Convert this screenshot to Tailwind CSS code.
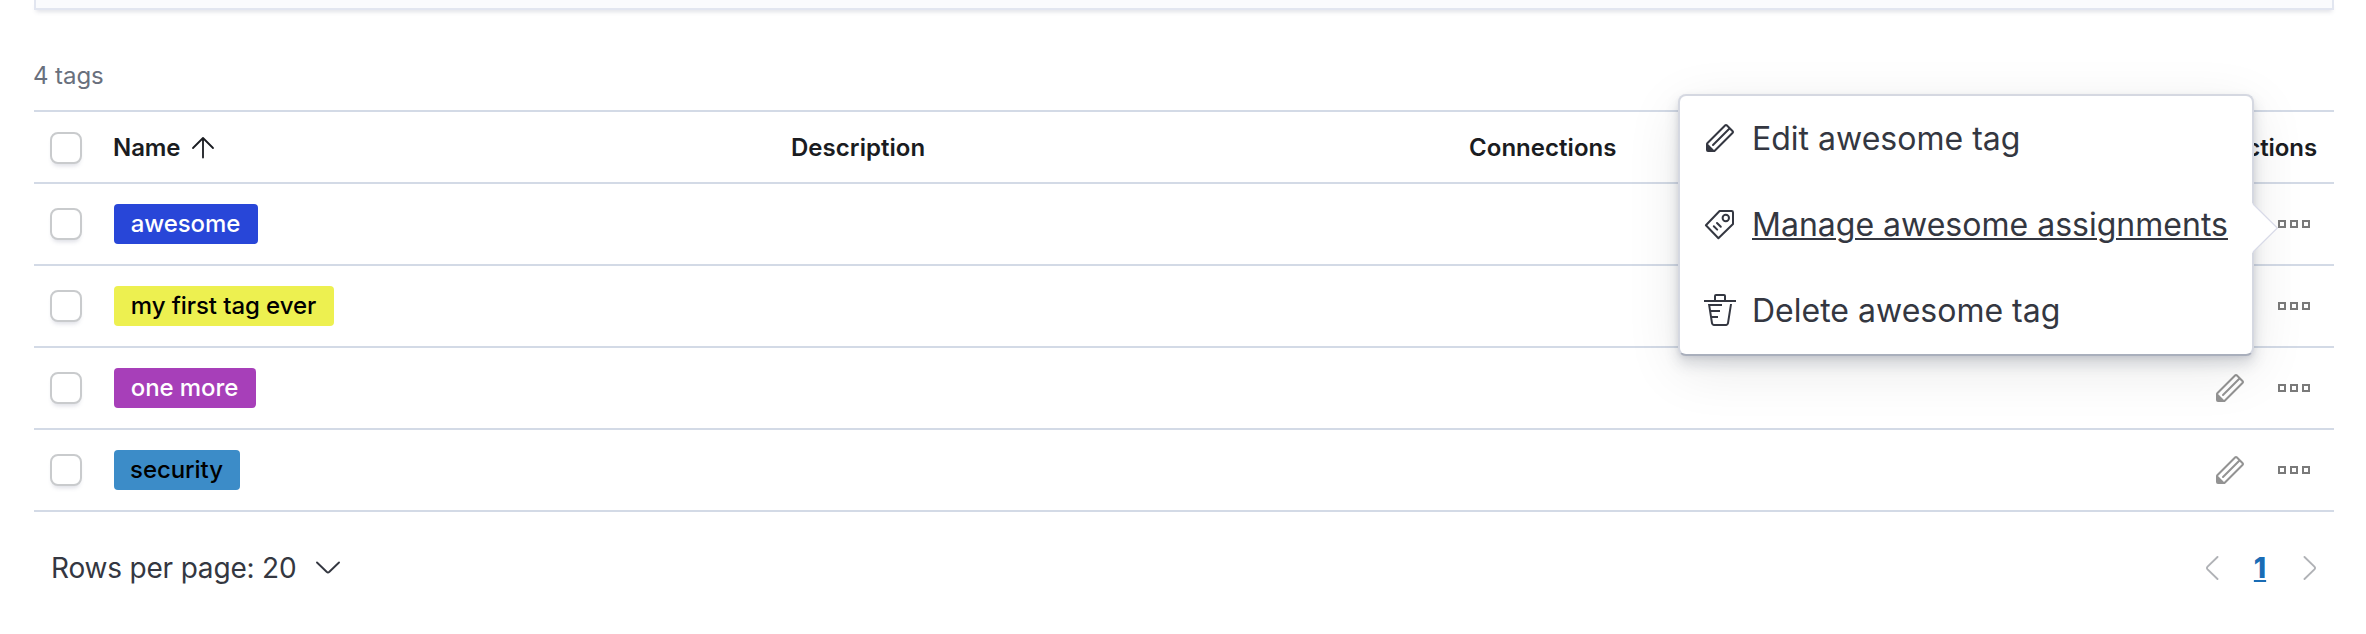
<!DOCTYPE html>
<html lang="en">
<head>
<meta charset="utf-8">
<title>Tags</title>
<script src="https://cdn.jsdelivr.net/npm/@tailwindcss/browser@4"></script>
</head>
<body class="relative h-[634px] overflow-hidden bg-white px-8.5 pr-8 font-['Inter','Liberation_Sans',sans-serif] tracking-[-0.005em] text-[#343741]">
<svg class="hidden">
  <symbol id="pencil" viewBox="0 0 16 16"><path d="M12.148 3.148L11 2l-9 9v3h3l9-9-1.144-1.144-8.002 7.998a.502.502 0 01-.708 0 .502.502 0 010-.708l8.002-7.998zM11 1c.256 0 .512.098.707.293l3 3a.999.999 0 010 1.414l-9 9A.997.997 0 015 15H2a1 1 0 01-1-1v-3c0-.265.105-.52.293-.707l9-9A.997.997 0 0111 1zM5 14H2v-3l3 3z"/></symbol>
  <symbol id="boxes" viewBox="0 0 16 16"><path d="M0 6h4v4H0V6zm1 1v2h2V7H1zm5-1h4v4H6V6zm1 1v2h2V7H7zm5-1h4v4h-4V6zm1 3h2V7h-2v2z"/></symbol>
  <symbol id="tag" viewBox="0 0 16 16"><path fill="none" stroke="currentColor" stroke-linejoin="round" d="M7.800 1.500h6q.7 0 .7.700v5.800L7.200 15.100.95 8.600z"/><circle cx="10.900" cy="5" r="1.600" fill="none" stroke="currentColor"/><path fill="none" stroke="currentColor" stroke-linecap="round" d="M4.900 9.100l1.700 1.700M6.500 7.500l1.900 1.900"/></symbol>
  <symbol id="trash" viewBox="0 0 16 16"><path d="M11 3h5v1H0V3h5V1a1 1 0 011-1h4a1 1 0 011 1v2zm-7.056 8H7v1H4.1l.392 2.519c.042.269.254.458.493.458h6.03c.239 0 .451-.189.493-.458l1.498-9.576H14l-1.504 9.73c-.116.747-.74 1.304-1.481 1.304h-6.03c-.741 0-1.365-.557-1.481-1.304l-1.511-9.73H9V5.95H3.157L3.476 8H8v1H3.632l.312 2zM6 3h4V1H6v2z"/></symbol>
</svg>

<div class="h-2.5 border-2 border-t-0 border-[#e2e6f0] bg-[#fafbfd] shadow-[0_4px_4px_-2px_rgba(90,95,130,0.18)]"></div>

<div class="flex h-25 items-center pt-[31px] text-2xl leading-9 text-[#69707d]"><span class="mt-px -ml-px">4 tags</span></div>

<div class="border-t-2 border-[#d3dae6]">
  <div class="grid h-18 grid-cols-[64px_678px_678px_678px_1fr] items-center border-b-2 border-[#d3dae6] text-2xl font-semibold text-[#1a1c21]">
    <div class="pt-0.5 pl-4"><div class="size-8 rounded-lg border-2 border-[#c9cbcd] bg-white shadow-[0_4px_4px_-2px_rgba(90,95,130,0.2)]"></div></div>
    <div class="flex items-center gap-2.5 pt-px pl-[15px]"><span>Name</span><svg class="h-6 w-6" viewBox="0 0 24 24" fill="none" stroke="currentColor" stroke-width="1.8" stroke-linecap="round" stroke-linejoin="round"><path d="M12 21.500V2M2 12L12 2l10 10"/></svg></div>
    <div class="pt-px pl-[15px] tracking-[0.04px]">Description</div>
    <div class="pt-px pl-[15px] tracking-[0.04px]">Connections</div>
    <div class="pt-px pr-[17px] text-right">Actions</div>
  </div>

  <div class="grid h-20.5 grid-cols-[64px_1fr_auto] items-center border-b-2 border-[#d3dae6]">
    <div class="pl-4"><div class="size-8 rounded-lg border-2 border-[#c9cbcd] bg-white shadow-[0_4px_4px_-2px_rgba(90,95,130,0.2)]"></div></div>
    <div class="pl-4"><div class="flex h-10 w-36 items-center justify-center rounded bg-[#2846d8] pr-px text-2xl font-medium text-white">awesome</div></div>
    <div class="flex gap-8 pr-6 text-[#7a7a7a]"><svg class="size-8 fill-[#939393]"><use href="#pencil"/></svg><svg class="size-8 fill-current"><use href="#boxes"/></svg></div>
  </div>
  <div class="grid h-20.5 grid-cols-[64px_1fr_auto] items-center border-b-2 border-[#d3dae6]">
    <div class="pl-4"><div class="size-8 rounded-lg border-2 border-[#c9cbcd] bg-white shadow-[0_4px_4px_-2px_rgba(90,95,130,0.2)]"></div></div>
    <div class="pl-4"><div class="flex h-10 w-55 items-center justify-center rounded bg-[#edf050] pr-px text-2xl font-medium text-black">my first tag ever</div></div>
    <div class="flex gap-8 pr-6 text-[#7a7a7a]"><svg class="size-8 fill-[#939393]"><use href="#pencil"/></svg><svg class="size-8 fill-current"><use href="#boxes"/></svg></div>
  </div>
  <div class="grid h-20.5 grid-cols-[64px_1fr_auto] items-center border-b-2 border-[#d3dae6]">
    <div class="pl-4"><div class="size-8 rounded-lg border-2 border-[#c9cbcd] bg-white shadow-[0_4px_4px_-2px_rgba(90,95,130,0.2)]"></div></div>
    <div class="pl-4"><div class="flex h-10 w-[142px] items-center justify-center rounded bg-[#a73fb9] pr-px text-2xl font-medium text-white">one more</div></div>
    <div class="flex gap-8 pr-6 text-[#7a7a7a]"><svg class="size-8 fill-[#939393]"><use href="#pencil"/></svg><svg class="size-8 fill-current"><use href="#boxes"/></svg></div>
  </div>
  <div class="grid h-20.5 grid-cols-[64px_1fr_auto] items-center border-b-2 border-[#d3dae6]">
    <div class="pl-4"><div class="size-8 rounded-lg border-2 border-[#c9cbcd] bg-white shadow-[0_4px_4px_-2px_rgba(90,95,130,0.2)]"></div></div>
    <div class="pl-4"><div class="flex h-10 w-[126px] items-center justify-center rounded bg-[#3c8cc8] pr-px text-2xl font-medium text-black">security</div></div>
    <div class="flex gap-8 pr-6 text-[#7a7a7a]"><svg class="size-8 fill-[#939393]"><use href="#pencil"/></svg><svg class="size-8 fill-current"><use href="#boxes"/></svg></div>
  </div>
</div>

<div class="flex h-28 items-center justify-between pr-4 pl-[17px] text-[28px]">
  <div class="flex items-center gap-5"><span class="tracking-[-0.19px]">Rows per page: 20</span><svg class="h-3.5 w-6" viewBox="0 0 24 14" fill="none" stroke="currentColor" stroke-width="1.9" stroke-linecap="round" stroke-linejoin="round"><path d="M1 1.500l9.600 9.300q1.400 1.200 2.800 0L23 1.500"/></svg></div>
  <div class="flex items-center pr-px">
    <svg class="h-6 w-3.5" viewBox="0 0 14 24" fill="none" stroke="#b0b2b6" stroke-width="1.9" stroke-linecap="round"><path d="M12.500 1L2.600 10.600q-1.300 1.400 0 2.800L12.500 23"/></svg>
    <span class="w-[84px] pr-0.5 text-center font-extrabold text-[#1a6cb5] underline decoration-2 underline-offset-2">1</span>
    <svg class="h-6 w-3.5" viewBox="0 0 14 24" fill="none" stroke="#b0b2b6" stroke-width="1.9" stroke-linecap="round"><path d="M1.500 1l9.900 9.600q1.300 1.400 0 2.800L1.500 23"/></svg>
  </div>
</div>

<div class="absolute top-[94px] left-[1678px] w-[576px] rounded-lg border-2 border-[#d5d8e1] border-b-[#a9afbc] bg-white text-[32px] leading-[38px] tracking-[0.01px] shadow-[0_2px_4px_rgba(60,65,90,0.08),0_8px_14px_rgba(60,70,95,0.18),0_14px_56px_rgba(0,0,0,0.09)]">
  <div class="flex h-[86px] items-center gap-4 px-6"><svg class="-mt-0.5 size-8 shrink-0 fill-current"><use href="#pencil"/></svg><span class="whitespace-nowrap">Edit awesome tag</span></div>
  <div class="flex h-[86px] items-center gap-4 px-6"><svg class="-mt-0.5 size-8 shrink-0 fill-current"><use href="#tag"/></svg><span class="whitespace-nowrap underline decoration-2 underline-offset-2">Manage awesome assignments</span></div>
  <div class="flex h-[86px] items-center gap-4 px-6"><svg class="-mt-0.5 size-8 shrink-0 fill-current"><use href="#trash"/></svg><span class="whitespace-nowrap">Delete awesome tag</span></div>
  <svg class="absolute top-[107px] left-[572px] h-[50px] w-[26px]" viewBox="0 0 26 50"><path d="M0 0L25.500 25 0 50z" fill="#fff"/><path d="M1 1l24.300 24L1 49" fill="none" stroke="#d9dbe8" stroke-width="1.200"/></svg>
</div>
</body>
</html>
